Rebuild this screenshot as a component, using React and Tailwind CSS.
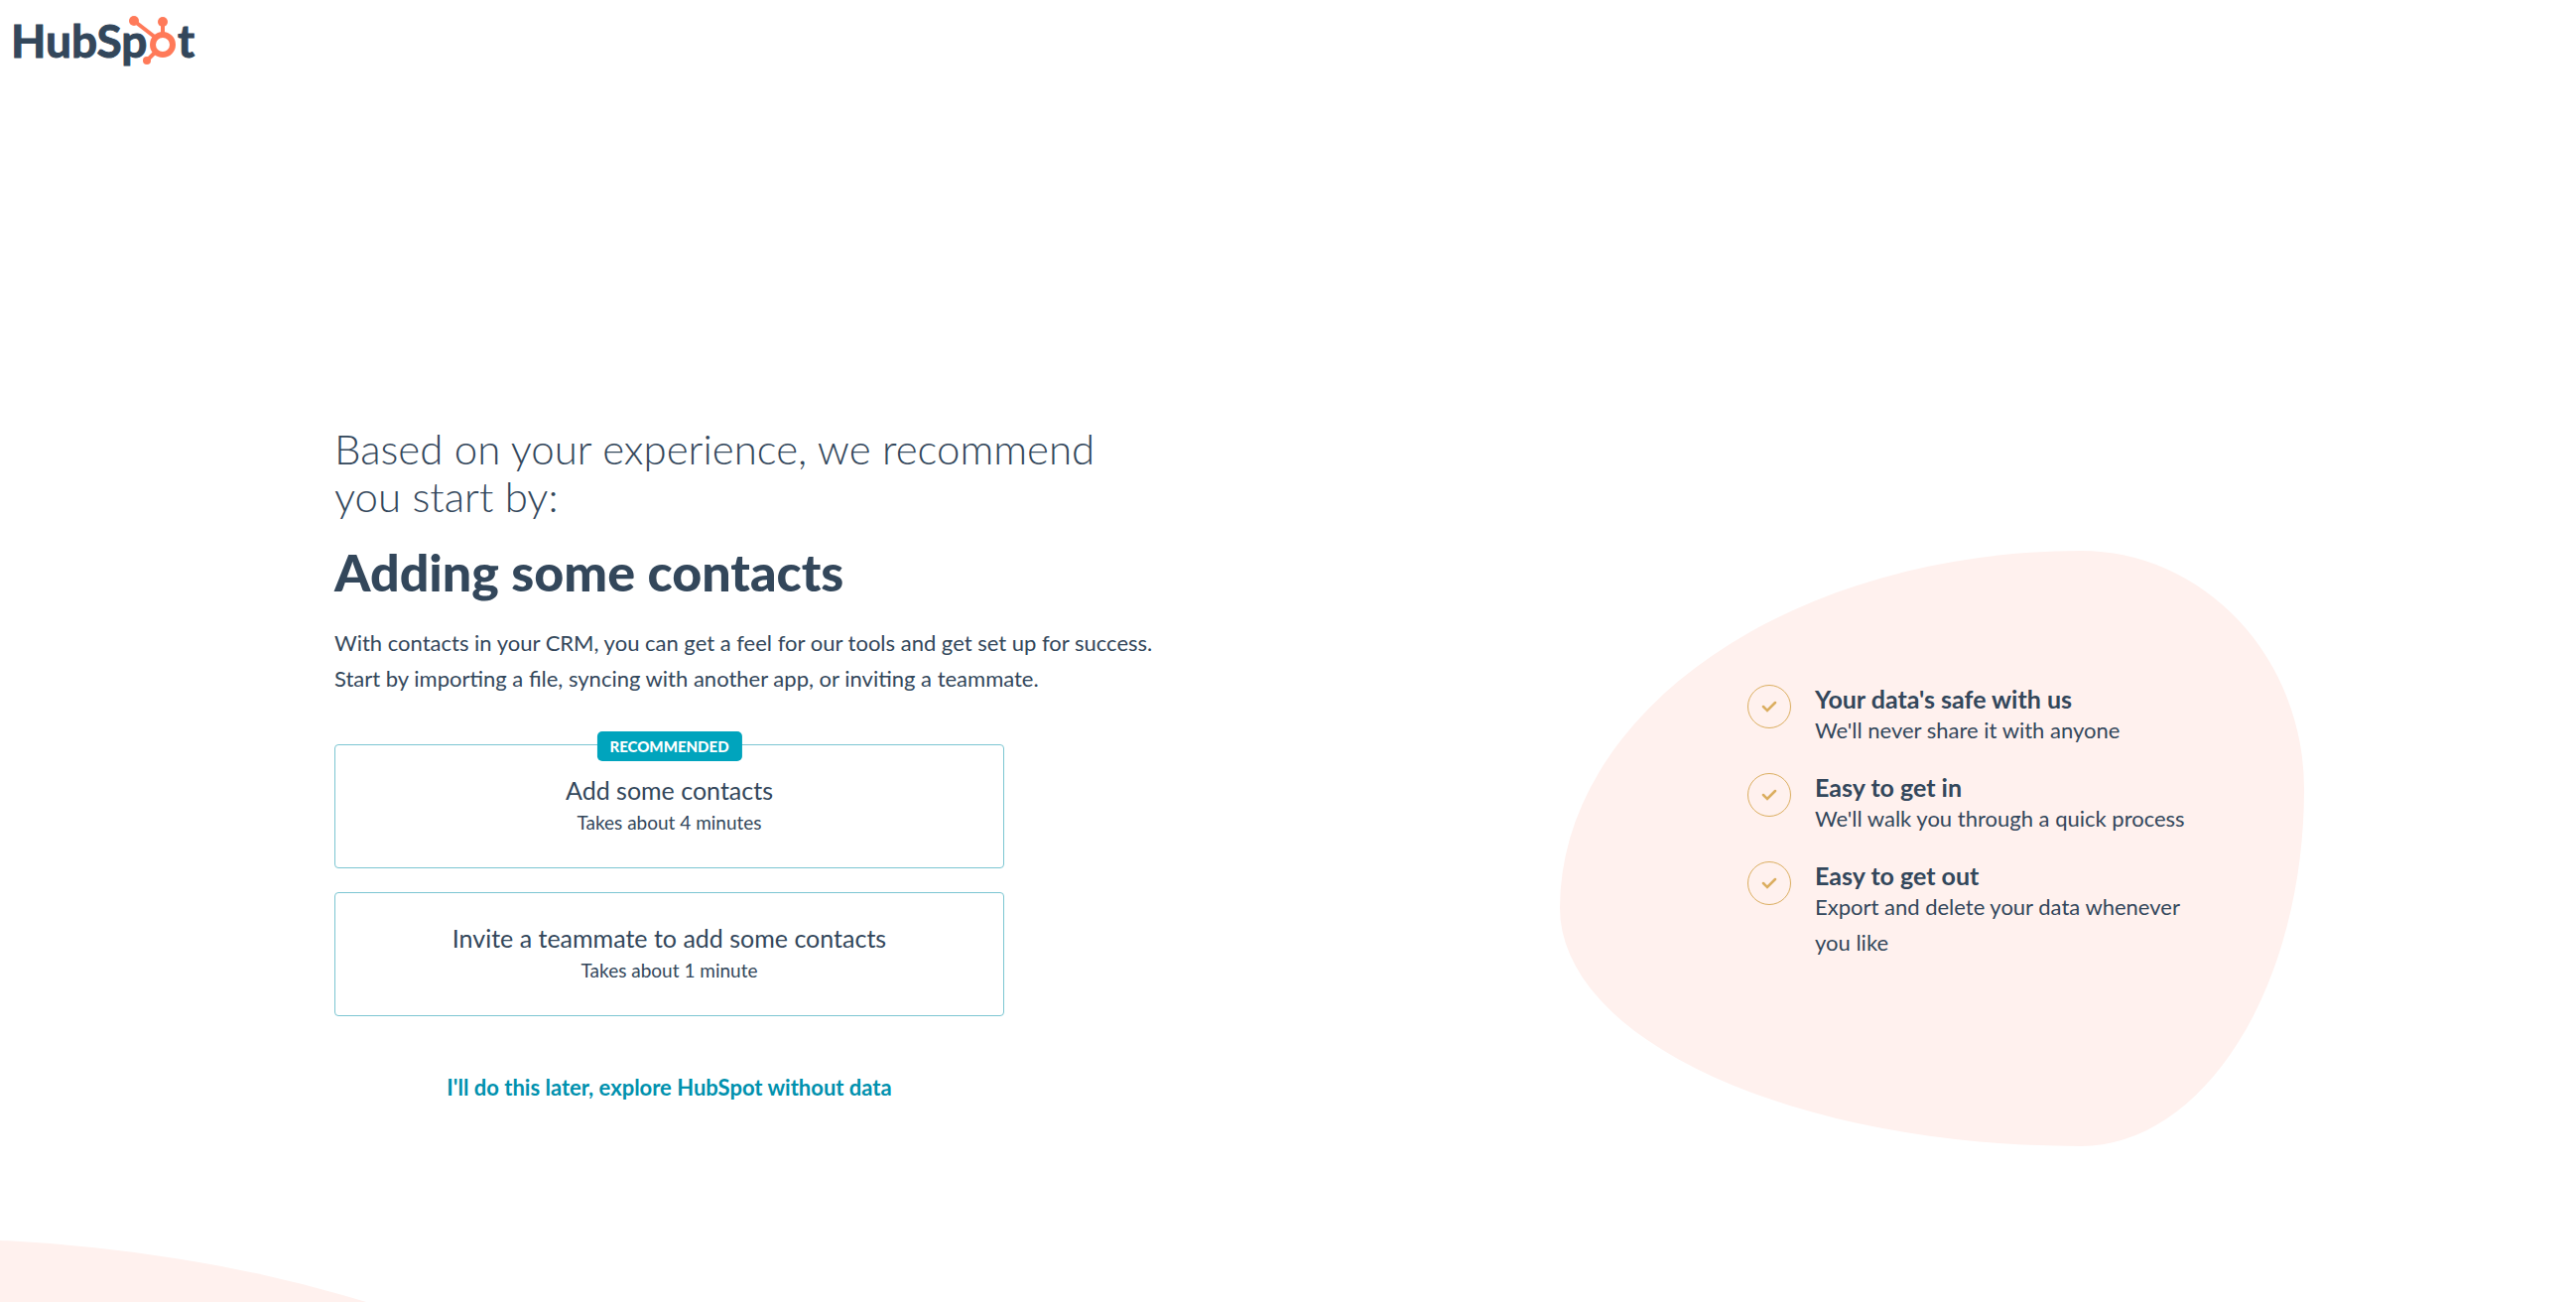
import React from 'react';

const options = [
  { title: 'Add some contacts', time: 'Takes about 4 minutes', recommended: true },
  { title: 'Invite a teammate to add some contacts', time: 'Takes about 1 minute', recommended: false },
];

const benefits = [
  { title: "Your data's safe with us", text: "We'll never share it with anyone" },
  { title: 'Easy to get in', text: "We'll walk you through a quick process" },
  { title: 'Easy to get out', text: 'Export and delete your data whenever you like' },
];

function Logo() {
  return (
    <svg width="200" height="72" viewBox="0 0 200 72" role="img" aria-label="HubSpot">
      <g fill="#33475b" fontFamily="Lato, sans-serif" fontWeight="700" fontSize="46" stroke="#33475b" strokeWidth="1">
        <text x="3" y="50">HubSp</text>
        <text x="171" y="50">t</text>
      </g>
      <g stroke="#ff7a59" fill="none">
        <path d="M127 13 L149 30 M156 14 V28 M149 44 L140 53" strokeWidth="4" />
        <circle cx="156" cy="37" r="10" strokeWidth="6" />
      </g>
      <g fill="#ff7a59">
        <circle cx="127" cy="13" r="5" />
        <circle cx="156" cy="14" r="5" />
        <circle cx="140" cy="53" r="4" />
      </g>
    </svg>
  );
}

function CheckIcon() {
  return (
    <svg width="18" height="18" viewBox="0 0 18 18" fill="none" aria-hidden="true">
      <path d="M3 9 L7 13 L15 5" stroke="currentColor" strokeWidth="2.5" strokeLinecap="round" />
    </svg>
  );
}

function OptionCard({ option }) {
  return (
    <button
      type="button"
      className="relative flex h-[125px] w-full flex-col items-center rounded-[4px] border border-[#7cc6d2] bg-white pt-[27px]"
    >
      {option.recommended && (
        <span className="absolute -top-[14px] left-1/2 flex h-[30px] -translate-x-1/2 items-center rounded-[5px] bg-[#00a4bd] px-[13px] text-[15px] font-black text-white">
          RECOMMENDED
        </span>
      )}
      <span className="text-[25px] leading-[36px]">{option.title}</span>
      <span className="text-[19px] leading-[30px]">{option.time}</span>
    </button>
  );
}

function Benefit({ benefit }) {
  return (
    <li className="flex gap-6">
      <span className="flex size-11 shrink-0 items-center justify-center rounded-full border border-[#dbae60] text-[#dbae60]">
        <CheckIcon />
      </span>
      <div>
        <h3 className="text-[25px] font-bold leading-[28px]">{benefit.title}</h3>
        <p className="text-[22px] leading-[36px]">{benefit.text}</p>
      </div>
    </li>
  );
}

export default function App() {
  return (
    <div className="relative flex min-h-screen flex-col overflow-hidden bg-white font-[Lato,sans-serif] text-[#33475b]">
      <div className="absolute -bottom-[896px] -left-[980px] h-[960px] w-[1800px] rounded-[50%] bg-[#fff1ee]" />

      <header className="flex px-2 pt-2">
        <a href="#home">
          <Logo />
        </a>
      </header>

      <main className="relative grid grid-cols-2 pt-[348px]">
        <section className="pl-[337px] pr-[8%]">
          <h2 className="max-w-[800px] text-[42px] font-light leading-[48px]">
            Based on your experience, we recommend you start by:
          </h2>
          <h1 className="mt-[22px] text-[52px] font-black leading-[60px]">Adding some contacts</h1>
          <p className="mt-6 text-[22px] leading-[36px]">
            With contacts in your CRM, you can get a feel for our tools and get set up for success.
            <br />
            Start by importing a file, syncing with another app, or inviting a teammate.
          </p>
          <div className="mt-12 flex w-[675px] flex-col gap-6">
            {options.map((option) => (
              <OptionCard key={option.title} option={option} />
            ))}
          </div>
          <div className="mt-14 w-[675px] text-center">
            <a href="#skip" className="text-[22px] font-bold leading-[32px] text-[#0091ae]">
              I'll do this later, explore HubSpot without data
            </a>
          </div>
        </section>

        <section className="flex justify-center pt-[127px]">
          <div className="h-[600px] w-[750px] rounded-[70%_30%_30%_70%/60%_40%_60%_40%] bg-[#fff1ee] pl-[189px] pt-[135px]">
            <ul className="flex w-[450px] flex-col gap-[25px]">
              {benefits.map((benefit) => (
                <Benefit key={benefit.title} benefit={benefit} />
              ))}
            </ul>
          </div>
        </section>
      </main>
    </div>
  );
}
